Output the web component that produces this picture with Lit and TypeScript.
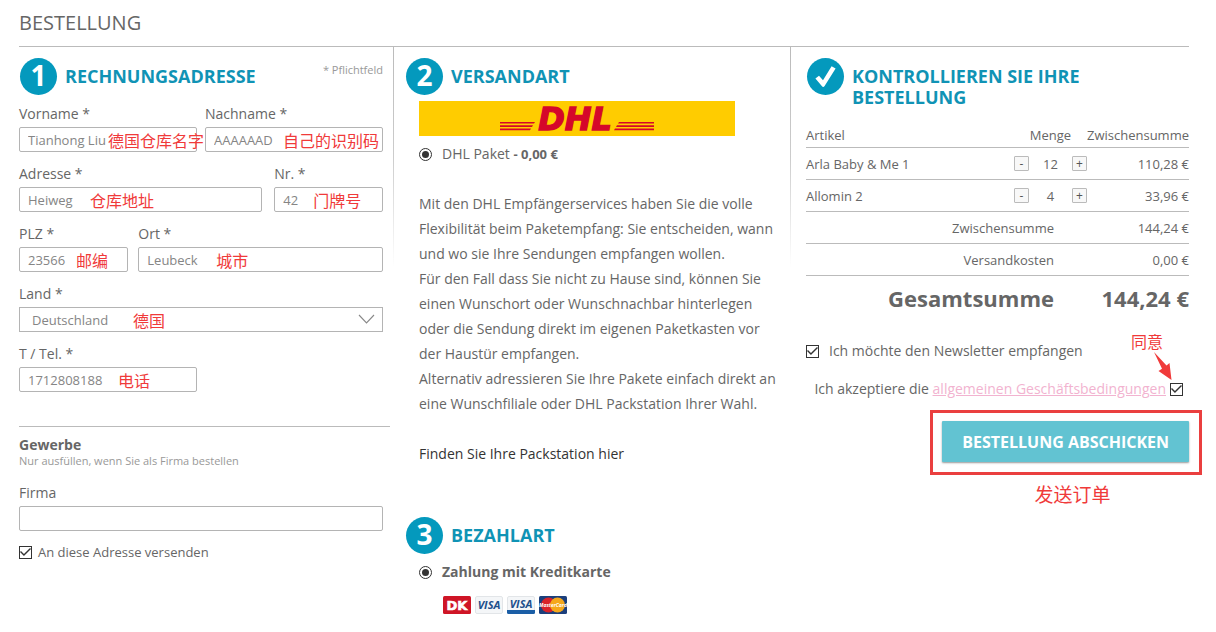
import { LitElement, html, svg, css, nothing } from "lit";
import { customElement, property } from "lit/decorators.js";

interface Field {
  id: string;
  label: string;
  value: string;
  note?: string;
  noteLeft?: number;
  select?: boolean;
}

interface Row {
  layout: string;
  fields: Field[];
}

const ROWS: Row[] = [
  {
    layout: "halves",
    fields: [
      { id: "vorname", label: "Vorname *", value: "Tianhong Liu", note: "德国仓库名字", noteLeft: 89 },
      { id: "nachname", label: "Nachname *", value: "AAAAAAD", note: "自己的识别码", noteLeft: 78 },
    ],
  },
  {
    layout: "wide-first",
    fields: [
      { id: "adresse", label: "Adresse *", value: "Heiweg", note: "仓库地址", noteLeft: 71 },
      { id: "nr", label: "Nr. *", value: "42", note: "门牌号", noteLeft: 39 },
    ],
  },
  {
    layout: "wide-last",
    fields: [
      { id: "plz", label: "PLZ *", value: "23566", note: "邮编", noteLeft: 57 },
      { id: "ort", label: "Ort *", value: "Leubeck", note: "城市", noteLeft: 78 },
    ],
  },
  {
    layout: "single",
    fields: [{ id: "land", label: "Land *", value: "Deutschland", note: "德国", noteLeft: 114, select: true }],
  },
  {
    layout: "halves",
    fields: [{ id: "tel", label: "T / Tel. *", value: "1712808188", note: "电话", noteLeft: 99 }],
  },
];

const ITEMS = [
  { name: "Arla Baby & Me 1", qty: 12, total: "110,28 €" },
  { name: "Allomin 2", qty: 4, total: "33,96 €" },
];

@customElement("step-heading")
export class StepHeading extends LitElement {
  @property() step = "";
  @property() heading = "";

  static styles = css`
    :host {
      display: flex;
      align-items: flex-start;
      gap: 8px;
      padding-left: 1px;
    }
    .circle {
      flex: none;
      display: grid;
      justify-content: center;
      width: 37px;
      height: 37px;
      border-radius: 50%;
      background: #0499bd;
      color: #fff;
      font-size: 28px;
      line-height: 35px;
      font-weight: 700;
    }
    .title {
      margin: 0;
      padding-top: 8px;
      font-size: 18px;
      line-height: 21px;
      font-weight: 700;
      color: #1093b5;
    }
    .tick {
      display: block;
    }
  `;

  render() {
    return html`
      <span class="circle">
        ${this.step === "check"
          ? html`<svg class="tick" width="37" height="37" viewBox="0 0 37 37" aria-hidden="true">
              <path d="M8.4 20.6 L12 17.7 L16 22.3 L24.6 8.2 L28.6 10.4 L17.6 28 Q16.2 29.8 14.8 28 Z" fill="#fff" />
            </svg>`
          : this.step}
      </span>
      <h2 class="title">${this.heading}</h2>
    `;
  }
}

@customElement("app-root")
export class AppRoot extends LitElement {
  static styles = css`
    :host {
      display: block;
      font-family: "Open Sans", "Noto Sans CJK SC", sans-serif;
      font-size: 14px;
      line-height: 20px;
      color: #666;
      background: #fff;
    }
    * {
      box-sizing: border-box;
    }
    .page {
      padding: 0 27px 0 19px;
    }
    .page-title {
      margin: 0;
      padding: 8px 0;
      font-size: 20px;
      line-height: 30px;
      font-weight: 400;
      border-bottom: 1px solid #bbb;
    }
    .columns {
      display: grid;
      grid-template-columns: 375fr 397fr 398fr;
    }
    .column {
      padding-top: 11px;
      min-width: 0;
    }
    .divided {
      background: linear-gradient(#bbb, #ccc 50%, #fff) right top / 1px 220px no-repeat;
    }
    .address {
      padding-right: 11px;
    }
    .shipping {
      padding-left: 11px;
      padding-right: 12px;
    }
    .review {
      padding-left: 15px;
    }
    .head-row {
      display: flex;
      justify-content: space-between;
      margin-bottom: 9px;
    }
    .hint {
      font-size: 11px;
      line-height: 16px;
      color: #999;
    }
    .head-row .hint {
      padding-top: 4px;
    }
    .fields {
      display: grid;
      gap: 12px;
    }
    .row {
      display: grid;
    }
    .halves {
      grid-template-columns: 1fr 1fr;
      gap: 8px;
    }
    .wide-first {
      grid-template-columns: 244fr 109fr;
      gap: 12px;
    }
    .wide-last {
      grid-template-columns: 109fr 244fr;
      gap: 10px;
    }
    .field {
      display: grid;
      gap: 3px;
      min-width: 0;
    }
    .control {
      position: relative;
      display: block;
    }
    .box {
      display: block;
      width: 100%;
      height: 25px;
      margin: 0;
      padding: 0 8px;
      border: 1px solid #b4b4b4;
      border-radius: 2px;
      background: #fff;
      color: #858585;
      font: inherit;
      font-size: 13px;
      appearance: none;
      outline: none;
    }
    .select {
      padding: 0 12px;
      border-radius: 0;
    }
    .chevron {
      position: absolute;
      right: 8px;
      top: 7px;
      pointer-events: none;
    }
    .note {
      position: absolute;
      top: 1px;
      font-family: "Noto Sans CJK SC", sans-serif;
      font-size: 16px;
      line-height: 24px;
      color: #f03a3a;
      white-space: nowrap;
      pointer-events: none;
    }
    .rule {
      height: 1px;
      margin: 34px -7px 10px 0;
      border: 0;
      background: #bbb;
    }
    .sub-title {
      margin: 0;
      font-size: 14px;
      line-height: 16px;
      font-weight: 700;
    }
    .company .hint {
      margin: 0 0 15px;
      line-height: 15px;
    }
    .choice {
      display: flex;
      align-items: center;
      gap: 10px;
    }
    .ship-here {
      gap: 6px;
      margin-top: 11px;
      font-size: 13px;
    }
    .check,
    .radio {
      flex: none;
      display: grid;
      place-items: center;
      appearance: none;
      width: 13px;
      height: 13px;
      margin: 0;
      border: 1px solid #333;
      background: #fff;
    }
    .check:checked::before {
      content: "";
      width: 11px;
      height: 11px;
      background: #333;
      clip-path: polygon(0 50%, 9% 42%, 36% 69%, 91% 14%, 100% 23%, 36% 87%);
    }
    .radio {
      border-radius: 50%;
    }
    .radio:checked::before {
      content: "";
      width: 7px;
      height: 7px;
      border-radius: 50%;
      background: #333;
    }
    .methods {
      padding-left: 14px;
    }
    .banner {
      display: grid;
      place-items: center;
      max-width: 316px;
      height: 35px;
      margin: 6px 0 8px;
      background: #fc0;
    }
    .logo {
      display: block;
      overflow: visible;
    }
    .logo-text {
      font: italic 700 32px "DejaVu Sans", sans-serif;
    }
    .price {
      font-size: 13px;
    }
    .text {
      margin: 27px 0 25px;
      line-height: 25px;
    }
    .station {
      display: block;
      margin-bottom: 51px;
      line-height: 25px;
      color: #333;
      text-decoration: none;
    }
    .payment {
      margin-top: 8px;
    }
    .cards {
      display: flex;
      gap: 4px;
      margin-top: 14px;
      padding-left: 24px;
    }
    .dk-text {
      font: 900 13px "DejaVu Sans", sans-serif;
    }
    .visa-text {
      font: italic 700 11px "Open Sans", sans-serif;
    }
    .tiny-text {
      font: italic 700 5px "Open Sans", sans-serif;
    }
    .order {
      width: 100%;
      margin-top: 8px;
      border-spacing: 0;
      font-size: 13px;
    }
    .order th,
    .order td {
      height: 32px;
      padding: 0;
      border-bottom: 1px solid #bbb;
      font-weight: 400;
      text-align: left;
    }
    .order th {
      padding-top: 6px;
    }
    .order .qty-col {
      width: 73px;
      text-align: center;
    }
    .order .sum-col {
      width: 102px;
      text-align: right;
    }
    .order .sum-label {
      padding: 0 33px 0 0;
      text-align: right;
    }
    .order .grand th,
    .order .grand td {
      height: 44px;
      border: 0;
      font-size: 22px;
      font-weight: 700;
      white-space: nowrap;
    }
    .qty {
      display: flex;
      align-items: center;
      justify-content: space-between;
    }
    .step {
      width: 15px;
      height: 15px;
      padding: 0;
      border: 1px solid #bbb;
      border-radius: 1px;
      background: #f8f8f8;
      color: #555;
      font: inherit;
      font-size: 12px;
      line-height: 12px;
    }
    .newsletter {
      margin: 21px 0 18px;
    }
    .terms {
      display: flex;
      align-items: center;
      justify-content: flex-end;
      gap: 4px;
      padding-right: 6px;
    }
    .terms-link {
      color: #f2b3d0;
    }
    .tick-wrap {
      position: relative;
      display: grid;
    }
    .agree {
      position: absolute;
      right: 20px;
      top: -54px;
      font-family: "Noto Sans CJK SC", sans-serif;
      font-size: 16px;
      line-height: 24px;
      color: #f03a3a;
      white-space: nowrap;
    }
    .arrow {
      position: absolute;
      right: 10px;
      top: -32px;
    }
    .submit-area {
      display: grid;
      justify-content: end;
      margin-top: 22px;
    }
    .submit-wrap {
      position: relative;
    }
    .submit {
      display: block;
      height: 41px;
      padding: 0 20px;
      border: 0;
      border-radius: 1px;
      background: #62c3d2;
      box-shadow: 0 1px 2px #999;
      color: #fff;
      font: inherit;
      font-size: 16px;
      font-weight: 700;
    }
    .frame {
      position: absolute;
      inset: -11px -13px -13px -12px;
      border: 3px solid #ea3f3f;
      pointer-events: none;
    }
    .send {
      margin: 18px 0 0;
      padding-left: 14px;
      font-family: "Noto Sans CJK SC", sans-serif;
      font-size: 19px;
      line-height: 28px;
      text-align: center;
      color: #f03a3a;
    }
  `;

  private field(f: Field) {
    return html`
      <div class="field">
        <label for=${f.id}>${f.label}</label>
        <span class="control">
          ${f.select
            ? html`<select class="box select" id=${f.id}>
                  <option>${f.value}</option>
                </select>
                <svg class="chevron" width="17" height="11" viewBox="0 0 17 11" aria-hidden="true">
                  <path d="M1 1 L8.5 9 L16 1" fill="none" stroke="#888" stroke-width="1.1" />
                </svg>`
            : html`<input class="box" id=${f.id} type="text" .value=${f.value} />`}
          ${f.note ? html`<span class="note" style="left:${f.noteLeft}px">${f.note}</span>` : nothing}
        </span>
      </div>
    `;
  }

  private card(name: string, content: unknown) {
    return html`<svg width="28" height="18" viewBox="0 0 28 18" role="img" aria-label=${name}>${content}</svg>`;
  }

  render() {
    return html`
      <main class="page">
        <h1 class="page-title">BESTELLUNG</h1>
        <div class="columns">
          <section class="column divided address">
            <div class="head-row">
              <step-heading step="1" heading="RECHNUNGSADRESSE"></step-heading>
              <span class="hint">* Pflichtfeld</span>
            </div>
            <div class="fields">
              ${ROWS.map((r) => html`<div class="row ${r.layout}">${r.fields.map((f) => this.field(f))}</div>`)}
            </div>
            <hr class="rule" />
            <div class="company">
              <h3 class="sub-title">Gewerbe</h3>
              <p class="hint">Nur ausfüllen, wenn Sie als Firma bestellen</p>
              ${this.field({ id: "firma", label: "Firma", value: "" })}
            </div>
            <label class="choice ship-here">
              <input class="check" type="checkbox" checked />An diese Adresse versenden
            </label>
          </section>

          <section class="column divided shipping">
            <step-heading step="2" heading="VERSANDART"></step-heading>
            <div class="methods">
              <div class="banner">
                <svg class="logo" width="154" height="35" viewBox="0 0 154 35" role="img" aria-label="DHL">
                  <g fill="#d5072a">
                    <path d="M0 20.9 H35 L34 22.6 H0 Z M0 24.2 H33 L32 25.9 H0 Z M0 27.5 H31 L30 29.2 H0 Z" />
                    <path d="M119 20.9 H154 V22.6 H118 Z M117 24.2 H154 V25.9 H116 Z M115 27.5 H154 V29.2 H114 Z" />
                    <text class="logo-text" x="75" y="29" text-anchor="middle" stroke="#d5072a" stroke-width="1.4">
                      DHL
                    </text>
                  </g>
                </svg>
              </div>
              <label class="choice">
                <input class="radio" type="radio" name="shipping" checked />
                <span>DHL Paket <b class="price">- 0,00 €</b></span>
              </label>
              <p class="text">
                Mit den DHL Empfängerservices haben Sie die volle Flexibilität beim Paketempfang: Sie entscheiden, wann
                und wo sie Ihre Sendungen empfangen wollen.<br />
                Für den Fall dass Sie nicht zu Hause sind, können Sie einen Wunschort oder Wunschnachbar hinterlegen
                oder die Sendung direkt im eigenen Paketkasten vor der Haustür empfangen.<br />
                Alternativ adressieren Sie Ihre Pakete einfach direkt an eine Wunschfiliale oder DHL Packstation Ihrer
                Wahl.
              </p>
              <a class="station" href="#">Finden Sie Ihre Packstation hier</a>
            </div>
            <step-heading step="3" heading="BEZAHLART"></step-heading>
            <div class="methods">
              <label class="choice payment">
                <input class="radio" type="radio" name="payment" checked />
                <b>Zahlung mit Kreditkarte</b>
              </label>
              <div class="cards">
                ${this.card(
                  "Dankort",
                  svg`<rect width="28" height="18" rx="1.5" fill="#cf1526" />
                    <text class="dk-text" x="14" y="14" text-anchor="middle" fill="#fff" stroke="#fff" stroke-width=".6">DK</text>`
                )}
                ${this.card(
                  "Visa",
                  svg`<rect x=".5" y=".5" width="27" height="17" rx="1.5" fill="#f4f6f8" stroke="#e2e5e8" />
                    <text class="visa-text" x="14" y="13" text-anchor="middle" fill="#1d4f8c">VISA</text>`
                )}
                ${this.card(
                  "Visa Electron",
                  svg`<rect x=".5" y=".5" width="27" height="17" rx="1.5" fill="#f4f6f8" stroke="#e2e5e8" />
                    <path d="M0 14 H28 V16.5 Q28 18 26.5 18 H1.5 Q0 18 0 16.5 Z" fill="#1b5ea6" />
                    <text class="visa-text" x="14" y="12" text-anchor="middle" fill="#1d4f8c">VISA</text>`
                )}
                ${this.card(
                  "MasterCard",
                  svg`<rect width="28" height="18" rx="1.5" fill="#1c3f7c" />
                    <circle cx="9.5" cy="9" r="7.5" fill="#d8232a" />
                    <circle cx="18.5" cy="9" r="7.5" fill="#f5a81c" />
                    <text class="tiny-text" x="14" y="11" text-anchor="middle" fill="#fff">MasterCard</text>`
                )}
              </div>
            </div>
          </section>

          <section class="column review">
            <step-heading step="check" heading="KONTROLLIEREN SIE IHRE BESTELLUNG"></step-heading>
            <table class="order">
              <thead>
                <tr>
                  <th>Artikel</th>
                  <th class="qty-col">Menge</th>
                  <th class="sum-col">Zwischensumme</th>
                </tr>
              </thead>
              <tbody>
                ${ITEMS.map(
                  (i) => html`<tr>
                    <td>${i.name}</td>
                    <td class="qty-col">
                      <div class="qty">
                        <button class="step" type="button">-</button>
                        <span>${i.qty}</span>
                        <button class="step" type="button">+</button>
                      </div>
                    </td>
                    <td class="sum-col">${i.total}</td>
                  </tr>`
                )}
                <tr>
                  <th class="sum-label" colspan="2">Zwischensumme</th>
                  <td class="sum-col">144,24 €</td>
                </tr>
                <tr>
                  <th class="sum-label" colspan="2">Versandkosten</th>
                  <td class="sum-col">0,00 €</td>
                </tr>
                <tr class="grand">
                  <th class="sum-label" colspan="2">Gesamtsumme</th>
                  <td class="sum-col">144,24 €</td>
                </tr>
              </tbody>
            </table>
            <label class="choice newsletter">
              <input class="check" type="checkbox" checked />Ich möchte den Newsletter empfangen
            </label>
            <div class="terms">
              <label for="agb">Ich akzeptiere die <a class="terms-link" href="#">allgemeinen Geschäftsbedingungen</a></label>
              <span class="tick-wrap">
                <input class="check" id="agb" type="checkbox" checked />
                <span class="agree">同意</span>
                <svg class="arrow" width="20" height="30" viewBox="0 0 20 30" aria-hidden="true">
                  <path d="M1 1 L13.5 14.5 L16.5 12 L18.5 29 L5.5 20 L9 17.8 Z" fill="#f03a3a" />
                </svg>
              </span>
            </div>
            <div class="submit-area">
              <div class="submit-wrap">
                <button class="submit" type="button">BESTELLUNG ABSCHICKEN</button>
                <span class="frame"></span>
              </div>
              <p class="send">发送订单</p>
            </div>
          </section>
        </div>
      </main>
    `;
  }
}
